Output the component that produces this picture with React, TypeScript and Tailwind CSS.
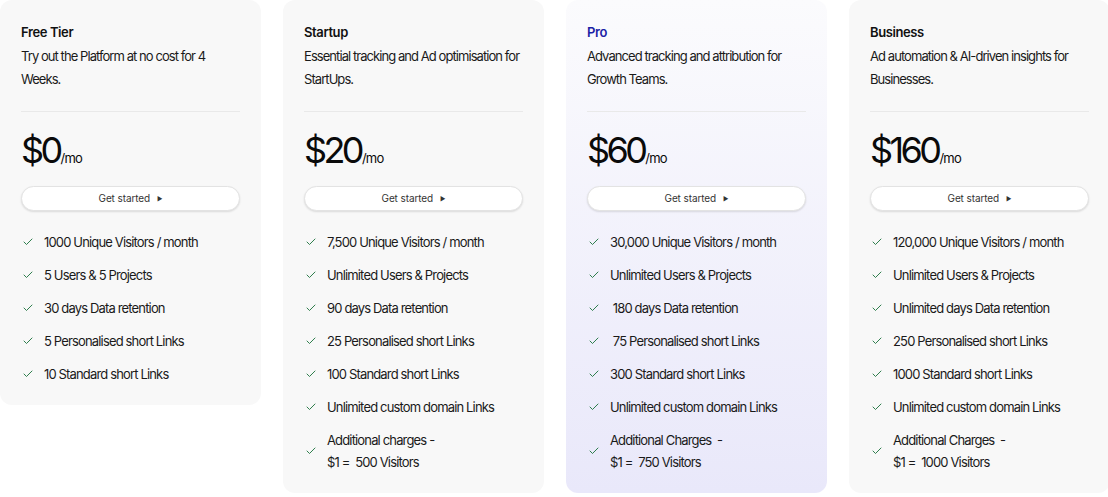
import { Check } from "lucide-react";

type Plan = {
  name: string;
  desc: string[];
  price: string;
  features: string[][];
  pro?: boolean;
};

const plans: Plan[] = [
  {
    name: "Free Tier",
    desc: ["Try out the Platform at no cost for 4", "Weeks."],
    price: "$0",
    features: [
      ["1000 Unique Visitors / month"],
      ["5 Users & 5 Projects"],
      ["30 days Data retention"],
      ["5 Personalised short Links"],
      ["10 Standard short Links"],
    ],
  },
  {
    name: "Startup",
    desc: ["Essential tracking and Ad optimisation for", "StartUps."],
    price: "$20",
    features: [
      ["7,500 Unique Visitors / month"],
      ["Unlimited Users & Projects"],
      ["90 days Data retention"],
      ["25 Personalised short Links"],
      ["100 Standard short Links"],
      ["Unlimited custom domain Links"],
      ["Additional charges -", "$1 =  500 Visitors"],
    ],
  },
  {
    name: "Pro",
    desc: ["Advanced tracking and attribution for", "Growth Teams."],
    price: "$60",
    pro: true,
    features: [
      ["30,000 Unique Visitors / month"],
      ["Unlimited Users & Projects"],
      [" 180 days Data retention"],
      [" 75 Personalised short Links"],
      ["300 Standard short Links"],
      ["Unlimited custom domain Links"],
      ["Additional Charges  -", "$1 =  750 Visitors"],
    ],
  },
  {
    name: "Business",
    desc: ["Ad automation & AI-driven insights for", "Businesses."],
    price: "$160",
    features: [
      ["120,000 Unique Visitors / month"],
      ["Unlimited Users & Projects"],
      ["Unlimited days Data retention"],
      ["250 Personalised short Links"],
      ["1000 Standard short Links"],
      ["Unlimited custom domain Links"],
      ["Additional Charges  -", "$1 =  1000 Visitors"],
    ],
  },
];

const PlanCard = ({ plan }: { plan: Plan }) => (
  <div
    className={
      plan.pro
        ? "w-[261px] shrink-0 self-start rounded-xl bg-gradient-to-b from-[#fbfbfd] to-[#e9e8fa] px-[21px] pt-[23px] pb-[20px]"
        : "w-[261px] shrink-0 self-start rounded-xl bg-[#f8f8f8] px-[21px] pt-[23px] pb-[20px]"
    }
  >
    <div
      className={
        plan.pro
          ? "text-[13px] font-semibold leading-[18px] tracking-[-0.03em] text-[#1c1fa6]"
          : "text-[13px] font-semibold leading-[18px] tracking-[-0.03em] text-[#111]"
      }
    >
      {plan.name}
    </div>
    <div className="mt-[4px] text-[13px] leading-[23px] tracking-[-0.072em] text-[#1a1a1a] whitespace-pre">
      {plan.desc.join("\n")}
    </div>
    <div className="mt-[20px] h-px bg-[#e9e9e9]" />
    <div className="mt-[16px] flex items-baseline text-[#0a0a0a]">
      <span className="text-[36px] leading-[44px] tracking-[-0.1em]">{plan.price}</span>
      <span className="ml-[1px] text-[13px] tracking-[-0.06em]">/mo</span>
    </div>
    <button className="mt-[14px] flex h-[25px] w-full items-center justify-center gap-[7px] rounded-full border border-[#e3e3e3] bg-white text-[10px] tracking-[-0.01em] text-[#333] shadow-[0_1px_2px_rgba(0,0,0,0.12)]">
      Get started
      <span className="text-[6px] leading-none">▶</span>
    </button>
    <ul className="mt-[20px] flex flex-col gap-[11px]">
      {plan.features.map((f, i) => (
        <li key={i} className="flex items-center gap-[10px]">
          <Check size={12} strokeWidth={1.8} className="ml-[1px] text-[#19703a]" />
          <div className="text-[13px] leading-[22px] tracking-[-0.065em] text-[#1a1a1a] whitespace-pre">
            {f.join("\n")}
          </div>
        </li>
      ))}
    </ul>
  </div>
);

export default function App() {
  return (
    <div
      className="h-[497px] w-[1108px] overflow-hidden bg-white"
      style={{ fontFamily: "Inter, 'Noto Sans', sans-serif" }}
    >
      <div className="flex gap-[22px]">
        {plans.map((p) => (
          <PlanCard key={p.name} plan={p} />
        ))}
      </div>
    </div>
  );
}
